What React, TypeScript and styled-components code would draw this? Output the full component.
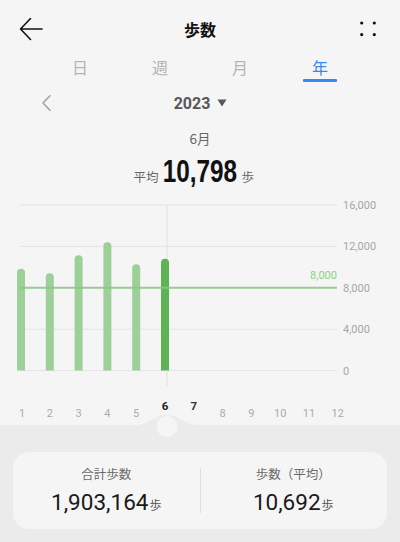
import React from "react";
import styled, { createGlobalStyle } from "styled-components";

const GlobalStyle = createGlobalStyle`
  html, body { margin: 0; padding: 0; background: #f5f5f5; }
  body { font-family: Roboto, "Noto Sans CJK JP", sans-serif; -webkit-font-smoothing: antialiased; }
  * { box-sizing: border-box; }
`;

const Screen = styled.div`
  width: 400px;
  height: 542px;
  display: flex;
  flex-direction: column;
  background: #f5f5f5;
  overflow: hidden;
`;

const Header = styled.header`
  height: 56px;
  display: grid;
  grid-template-columns: 60px 1fr 60px;
  align-items: center;
  padding: 1px 0 0;
`;

const IconButton = styled.button<{ $align: "start" | "end" }>`
  border: 0;
  background: none;
  padding: 0;
  height: 40px;
  display: flex;
  align-items: center;
  justify-content: ${(p) => (p.$align === "start" ? "flex-start" : "flex-end")};
  padding-left: ${(p) => (p.$align === "start" ? "19px" : "0")};
  padding-right: ${(p) => (p.$align === "end" ? "24px" : "0")};
  color: #111;
`;

const Title = styled.h1`
  margin: 0;
  text-align: center;
  font-family: "Noto Sans CJK JP", sans-serif;
  font-weight: 700;
  font-size: 16px;
  color: #111;
`;

const Tabs = styled.nav`
  display: grid;
  grid-template-columns: repeat(4, 80px);
  justify-content: center;
  height: 26px;
`;

const Tab = styled.div<{ $active?: boolean }>`
  display: flex;
  flex-direction: column;
  align-items: center;
  font-family: "Noto Sans CJK JP", sans-serif;
  font-size: 16px;
  line-height: 22px;
  color: ${(p) => (p.$active ? "#3a87f4" : "#b4b4b4")};
  &::after {
    content: "";
    margin-top: 1px;
    width: 34px;
    height: 2.5px;
    border-radius: 1px;
    background: ${(p) => (p.$active ? "#3a87f4" : "transparent")};
  }
`;

const YearRow = styled.div`
  height: 42px;
  position: relative;
  display: flex;
  align-items: center;
  justify-content: center;
`;

const PrevButton = styled.button`
  position: absolute;
  left: 38px;
  top: 13px;
  border: 0;
  background: none;
  padding: 0;
  display: flex;
`;

const YearLabel = styled.div`
  display: flex;
  align-items: center;
  gap: 7px;
  font-family: Roboto, sans-serif;
  font-weight: 700;
  font-size: 16px;
  color: #575757;
  margin-left: 1px;
`;

const MonthTitle = styled.div`
  margin-top: 4px;
  text-align: center;
  font-family: "Noto Sans CJK JP", sans-serif;
  font-size: 13.5px;
  line-height: 20px;
  color: #666;
`;

const AverageRow = styled.div`
  margin-top: 5px;
  height: 36px;
  display: grid;
  grid-template-columns: 1fr auto 1fr;
  align-items: baseline;
  column-gap: 4px;
`;

const SmallUnit = styled.span<{ $side: "left" | "right" }>`
  justify-self: ${(p) => (p.$side === "left" ? "end" : "start")};
  font-family: "Noto Sans CJK JP", sans-serif;
  font-size: 12.5px;
  color: #666;
`;

const BigNumber = styled.span`
  display: inline-block;
  font-family: "Liberation Sans", Arial, sans-serif;
  font-weight: 700;
  font-size: 32px;
  line-height: 36px;
  color: #111;
  transform: scaleX(0.76);
  transform-origin: center;
  margin: 0 -11px 0 -12px;
`;

const ChartSvg = styled.svg`
  display: block;
  width: 400px;
  height: 236px;
  font-family: Roboto, sans-serif;
`;

const Band = styled.section`
  position: relative;
  flex: 1;
  background: #ebebeb;
  padding: 27px 13px 0;
`;

const Notch = styled.svg`
  position: absolute;
  top: -15px;
  left: 137px;
  width: 60px;
  height: 30px;
`;

const SummaryCard = styled.div`
  height: 77px;
  border-radius: 16px;
  background: #f5f5f5;
  display: grid;
  grid-template-columns: 1fr 1px 1fr;
  align-items: center;
`;

const Divider = styled.div`
  width: 1px;
  height: 45px;
  background: #dedede;
`;

const Stat = styled.div<{ $shift?: number }>`
  display: flex;
  flex-direction: column;
  align-items: center;
  padding-top: 2px;
  margin-left: ${(p) => p.$shift ?? 0}px;
`;

const StatLabel = styled.div`
  font-family: "Noto Sans CJK JP", sans-serif;
  font-size: 12.5px;
  line-height: 18px;
  color: #6a6a6a;
`;

const StatValue = styled.div`
  margin-top: 6px;
  display: flex;
  align-items: baseline;
  font-family: Roboto, sans-serif;
  font-size: 22.5px;
  line-height: 26px;
  color: #1a1a1a;
`;

const StatUnit = styled.span`
  font-family: "Noto Sans CJK JP", sans-serif;
  font-size: 12px;
  color: #555;
  margin-left: 1px;
`;

const X0 = 21;
const STEP = 28.8;
const BASE = 181.6;
const TOP = 16;
const MAX = 16000;
const yOf = (v: number) => BASE - (v * (BASE - TOP)) / MAX;

const values = [9830, 9410, 11150, 12400, 10280, 10798];
const selected = 5;

function Chart() {
  const grid = [16000, 12000, 8000, 4000, 0];
  const avgY = yOf(8000);
  return (
    <ChartSvg viewBox="0 0 400 236">
      {grid.map((g) => (
        <g key={g}>
          <line x1={20} x2={337} y1={yOf(g)} y2={yOf(g)} stroke="#e4e4e4" strokeWidth={1} />
          <text x={343} y={yOf(g) + 4} fontSize={11} fill="#a6a6a6">
            {g.toLocaleString("en-US")}
          </text>
        </g>
      ))}
      <line x1={167} x2={167} y1={TOP} y2={197} stroke="#e2e2e2" strokeWidth={1} />
      {values.map((v, i) => {
        const cx = X0 + STEP * i;
        const t = yOf(v);
        return (
          <path
            key={i}
            d={`M${cx - 4} ${BASE} V${t + 4} A4 4 0 0 1 ${cx + 4} ${t + 4} V${BASE} Z`}
            fill={i === selected ? "#5db356" : "#9dd099"}
          />
        );
      })}
      <line x1={20} x2={337} y1={avgY} y2={avgY} stroke="#88c783" strokeOpacity={0.85} strokeWidth={2} />
      <text x={337} y={avgY - 9} fontSize={11} fill="#8ccf87" textAnchor="end">
        8,000
      </text>
      {Array.from({ length: 12 }, (_, i) => {
        const hi = i === 5 || i === 6;
        return (
          <text
            key={i}
            x={X0 + STEP * i + (i === 0 ? 1 : 0)}
            y={hi ? 221 : 228}
            fontSize={hi ? 11.5 : 11}
            fontWeight={hi ? 700 : 400}
            fill={hi ? (i === 5 ? "#1f1f1f" : "#333") : "#ababab"}
            textAnchor="middle"
          >
            {i + 1}
          </text>
        );
      })}
    </ChartSvg>
  );
}

export default function App() {
  return (
    <>
      <GlobalStyle />
      <Screen>
        <Header>
          <IconButton $align="start" aria-label="back">
            <svg width="24" height="24" viewBox="0 0 24 24" fill="none">
              <path d="M2 12 H23 M11.5 1.5 L1.5 12 L11.5 22.5" stroke="#111" strokeWidth="1.6" strokeLinecap="round" strokeLinejoin="round" />
            </svg>
          </IconButton>
          <Title>歩数</Title>
          <IconButton $align="end" aria-label="menu">
            <svg width="16" height="16" viewBox="0 0 16 16">
              <circle cx="1.7" cy="2" r="1.6" fill="#111" />
              <circle cx="14.3" cy="2" r="1.6" fill="#111" />
              <circle cx="1.7" cy="13.6" r="1.6" fill="#111" />
              <circle cx="14.3" cy="13.6" r="1.6" fill="#111" />
            </svg>
          </IconButton>
        </Header>
        <Tabs>
          <Tab>日</Tab>
          <Tab>週</Tab>
          <Tab>月</Tab>
          <Tab $active>年</Tab>
        </Tabs>
        <YearRow>
          <PrevButton aria-label="previous">
            <svg width="16" height="16" viewBox="0 0 16 16" fill="none">
              <path d="M12 0.8 L5 8 L12 15.2" stroke="#a0a0a0" strokeWidth="1.5" strokeLinecap="round" strokeLinejoin="round" />
            </svg>
          </PrevButton>
          <YearLabel>
            2023
            <svg width="10" height="8" viewBox="0 0 10 8">
              <path d="M0.5 0.5 H9.5 L5 7.5 Z" fill="#575757" />
            </svg>
          </YearLabel>
        </YearRow>
        <MonthTitle>6月</MonthTitle>
        <AverageRow>
          <SmallUnit $side="left">平均</SmallUnit>
          <BigNumber>10,798</BigNumber>
          <SmallUnit $side="right">歩</SmallUnit>
        </AverageRow>
        <Chart />
        <Band>
          <Notch viewBox="0 0 60 30">
            <path d="M0 15 C12 15 16 5 30 5 C44 5 48 15 60 15 L60 30 L0 30 Z" fill="#ebebeb" />
            <circle cx="30" cy="16.5" r="10.5" fill="#f5f5f5" />
          </Notch>
          <SummaryCard>
            <Stat $shift={0}>
              <StatLabel>合計歩数</StatLabel>
              <StatValue>
                1,903,164<StatUnit>歩</StatUnit>
              </StatValue>
            </Stat>
            <Divider />
            <Stat $shift={-1}>
              <StatLabel>歩数（平均）</StatLabel>
              <StatValue>
                10,692<StatUnit>歩</StatUnit>
              </StatValue>
            </Stat>
          </SummaryCard>
        </Band>
      </Screen>
    </>
  );
}
